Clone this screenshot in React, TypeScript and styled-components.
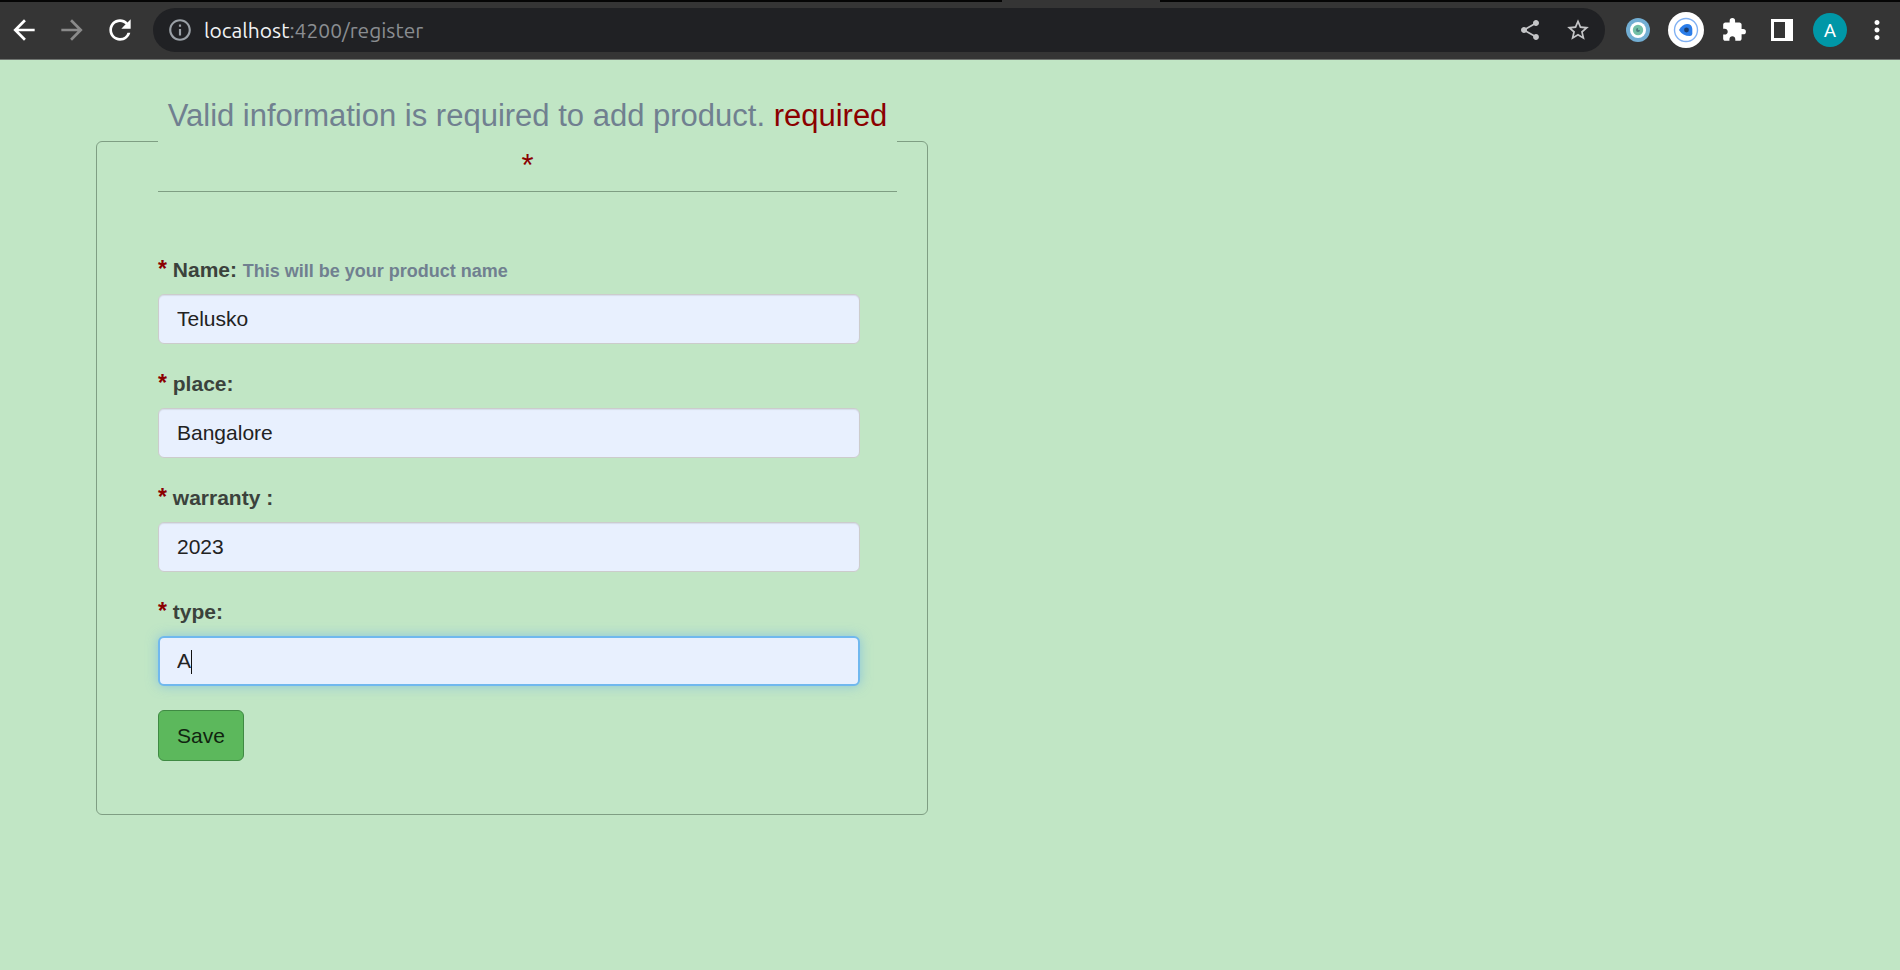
import React, { useState } from "react";
import styled, { createGlobalStyle } from "styled-components";
import {
  MdArrowBack,
  MdArrowForward,
  MdExtension,
  MdInfoOutline,
  MdMoreVert,
  MdRefresh,
  MdShare,
  MdStarBorder,
} from "react-icons/md";

const GlobalStyle = createGlobalStyle`
  *, *::before, *::after { box-sizing: border-box; }
  body {
    margin: 0;
    background: #c1e6c5;
    color: #333;
    font-family: "Liberation Sans", Arial, sans-serif;
    font-size: 21px;
    line-height: 30px;
  }
`;

const TabEdge = styled.div`
  display: grid;
  grid-template-columns: 1002fr 158fr 740fr;
  height: 2px;
  background: #353535;
`;

const TabGap = styled.span`
  background: #050505;
`;

const Toolbar = styled.header`
  display: flex;
  align-items: center;
  height: 58px;
  padding-bottom: 1px;
  background: #353535;
  border-bottom: 1px solid #6f7470;
`;

const IconButton = styled.button<{ $color?: string; $width?: number }>`
  display: flex;
  align-items: center;
  justify-content: center;
  flex: none;
  width: ${(p) => p.$width ?? 48}px;
  height: 44px;
  padding: 0;
  border: 0;
  background: none;
  color: ${(p) => p.$color ?? "#fff"};
  font: inherit;
`;

const AddressBar = styled.div`
  display: flex;
  align-items: center;
  flex: 1;
  min-width: 0;
  height: 44px;
  margin: 0 9px;
  padding: 0 3px;
  border-radius: 22px;
  background: #202124;
`;

const Address = styled.span`
  flex: 1;
  min-width: 0;
  overflow: hidden;
  white-space: nowrap;
  color: #8a8d91;
  font-family: Ubuntu, "Noto Sans", sans-serif;
  font-size: 21px;
`;

const Host = styled.span`
  color: #f1f3f4;
`;

const Avatar = styled.span`
  width: 34px;
  height: 34px;
  border-radius: 50%;
  background: #0097a7;
  color: #fff;
  font-family: Roboto, sans-serif;
  font-size: 19px;
  line-height: 35px;
  text-align: center;
`;

const Page = styled.main`
  padding: 31px 96px 48px;
`;

const ProductForm = styled.form`
  width: 100%;
  max-width: 832px;
`;

const Panel = styled.fieldset`
  min-width: 0;
  margin: 0;
  padding: 0 30px 53px 61px;
  border: 1px solid #7f9e83;
  border-radius: 6px;
`;

const Title = styled.legend`
  width: 100%;
  margin-bottom: 62px;
  padding: 0;
  border-bottom: 1px solid #7f9e83;
  color: slategray;
  font-size: 31px;
  line-height: 50px;
  text-align: center;
`;

const Required = styled.span`
  color: darkred;
`;

const Field = styled.div`
  width: 95%;
  margin-bottom: 24px;
`;

const Label = styled.label`
  display: block;
  margin-bottom: 8px;
  color: #3b423c;
  font-weight: bold;
  line-height: 32px;
`;

const Star = styled.span`
  color: darkred;
  font-size: 23px;
  line-height: 1;
`;

const Hint = styled.small`
  color: slategray;
  font-size: 18px;
  line-height: 1;
`;

const InputBox = styled.div`
  position: relative;
`;

const TextInput = styled.input`
  display: block;
  width: 100%;
  height: 50px;
  padding: 0 18px;
  border: 1px solid #ccc;
  border-radius: 6px;
  outline: 0;
  background: #e8f0fe;
  color: #222;
  font: inherit;
  box-shadow: inset 0 1px 1px rgba(0, 0, 0, 0.08);

  &:focus {
    border: 2px solid #70b8ee;
    padding: 0 17px;
    box-shadow: 0 0 12px rgba(102, 175, 233, 0.6);
    caret-color: transparent;
  }
`;

const Caret = styled.span`
  position: absolute;
  top: 14px;
  left: 33px;
  width: 1px;
  height: 24px;
  background: #111;
  pointer-events: none;
`;

const SaveButton = styled.button`
  height: 51px;
  padding: 0 18px;
  border: 1px solid #3f8a43;
  border-radius: 6px;
  background: #5cb85c;
  color: #10240f;
  font: inherit;
`;

const EyeIcon = () => (
  <svg width="24" height="24" viewBox="0 0 24 24">
    <circle cx="12" cy="12" r="12" fill="#72aed3" />
    <circle cx="12" cy="12" r="8" fill="#fff" />
    <circle cx="12" cy="12" r="5.2" fill="#72bfa5" />
    <path d="M12 10V12H14A2 2 0 1 1 12 10Z" fill="#4b7f80" />
  </svg>
);

const BlueEyeIcon = () => (
  <svg width="36" height="36" viewBox="0 0 36 36">
    <circle cx="18" cy="18" r="18" fill="#fff" />
    <circle cx="18" cy="18" r="11.5" fill="none" stroke="#80b1f3" strokeWidth="1.4" />
    <path d="M11 18Q14 12.500 19 12Q24 12 24.300 17V22Q24 24 22 24Q14.500 24 11 18Z" fill="#2b7de9" />
    <circle cx="18.500" cy="18" r="2.400" fill="#1b3f70" />
  </svg>
);

const SidePanelIcon = () => (
  <svg width="22" height="22" viewBox="0 0 22 22">
    <path fillRule="evenodd" fill="#fff" d="M0 0H22V22H0ZM3 3V19H14V3Z" />
  </svg>
);

const fields = [
  { id: "name", label: "Name:", hint: "This will be your product name", value: "Telusko" },
  { id: "place", label: "place:", value: "Bangalore" },
  { id: "warranty", label: "warranty :", value: "2023" },
  { id: "type", label: "type:", value: "A", focused: true },
];

export default function App() {
  const [values, setValues] = useState<Record<string, string>>(
    Object.fromEntries(fields.map((f) => [f.id, f.value]))
  );

  return (
    <>
      <GlobalStyle />
      <TabEdge>
        <TabGap />
        <span />
        <TabGap />
      </TabEdge>
      <Toolbar>
        <IconButton aria-label="Back"><MdArrowBack size={32} /></IconButton>
        <IconButton aria-label="Forward" $color="#8a8a8a"><MdArrowForward size={32} /></IconButton>
        <IconButton aria-label="Reload"><MdRefresh size={32} /></IconButton>
        <AddressBar>
          <IconButton aria-label="Site information" $color="#9aa0a6"><MdInfoOutline size={26} /></IconButton>
          <Address><Host>localhost</Host>:4200/register</Address>
          <IconButton aria-label="Share" $color="#c4c5c7"><MdShare size={24} /></IconButton>
          <IconButton aria-label="Bookmark" $color="#c4c5c7"><MdStarBorder size={26} /></IconButton>
        </AddressBar>
        <IconButton aria-label="Eye extension"><EyeIcon /></IconButton>
        <IconButton aria-label="Blue eye extension"><BlueEyeIcon /></IconButton>
        <IconButton aria-label="Extensions"><MdExtension size={26} /></IconButton>
        <IconButton aria-label="Side panel"><SidePanelIcon /></IconButton>
        <IconButton aria-label="Profile"><Avatar>A</Avatar></IconButton>
        <IconButton aria-label="Menu" $width={46}><MdMoreVert size={30} /></IconButton>
      </Toolbar>
      <Page>
        <ProductForm onSubmit={(e) => e.preventDefault()}>
          <Panel>
            <Title>
              Valid information is required to add product.{" "}
              <Required>required<br />*</Required>
            </Title>
            {fields.map((f) => (
              <Field key={f.id}>
                <Label htmlFor={f.id}>
                  <Star>*</Star> {f.label} {f.hint && <Hint>{f.hint}</Hint>}
                </Label>
                <InputBox>
                  <TextInput
                    id={f.id}
                    value={values[f.id]}
                    autoFocus={f.focused}
                    onChange={(e) => setValues({ ...values, [f.id]: e.target.value })}
                  />
                  {f.focused && values[f.id] === f.value && <Caret />}
                </InputBox>
              </Field>
            ))}
            <SaveButton type="submit">Save</SaveButton>
          </Panel>
        </ProductForm>
      </Page>
    </>
  );
}
